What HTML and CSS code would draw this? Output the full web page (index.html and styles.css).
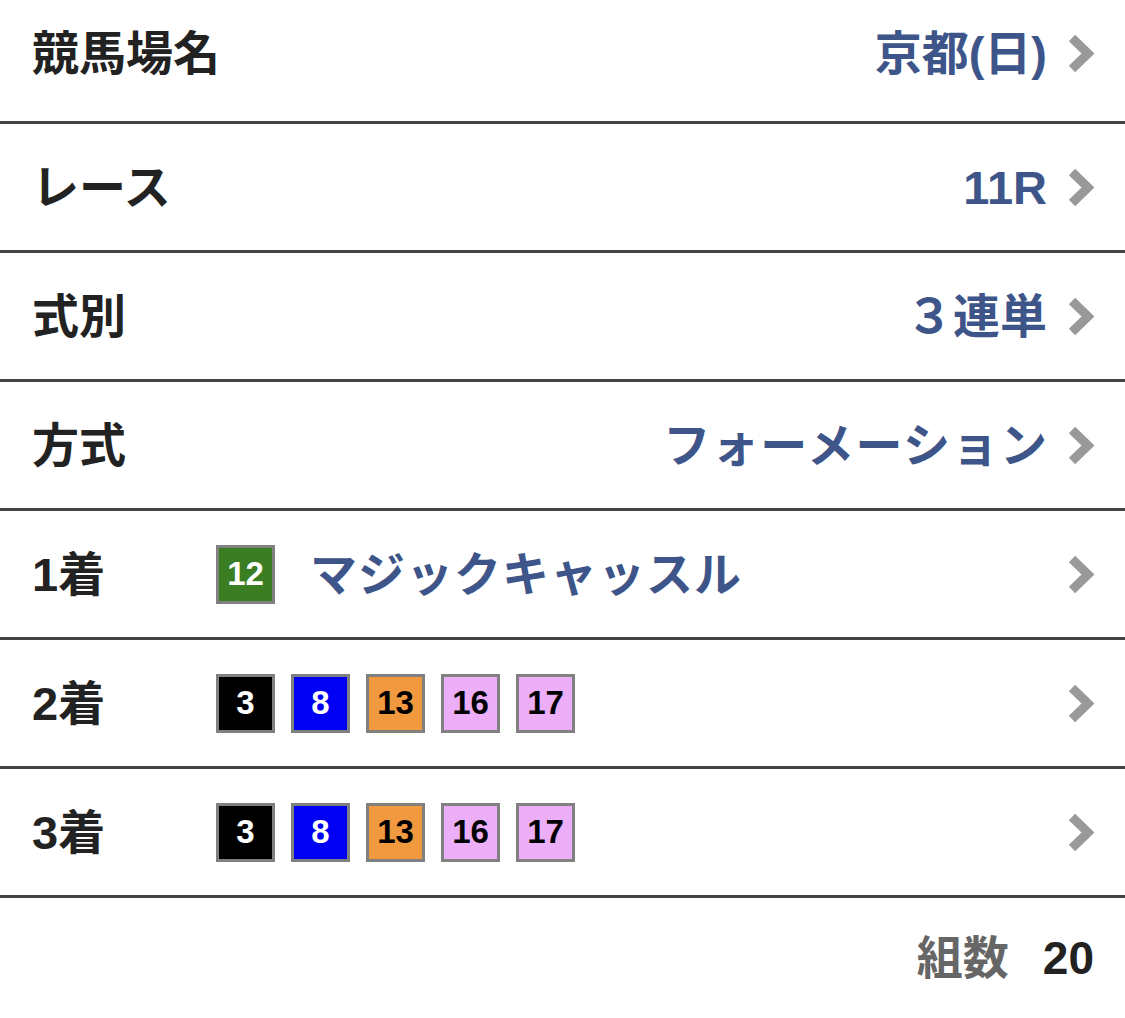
FILE: index.html
```html
<!DOCTYPE html>
<html lang="ja">
<head>
<meta charset="utf-8">
<link rel="stylesheet" href="styles.css">
</head>
<body>
<div class="list">
  <div class="row first">
    <div class="label">競馬場名</div>
    <div class="value">京都(日)</div>
    <svg class="chev" viewBox="0 0 27 41"><polyline points="5,5 21,20.5 5,36"/></svg>
  </div>
  <div class="row">
    <div class="label">レース</div>
    <div class="value">11R</div>
    <svg class="chev" viewBox="0 0 27 41"><polyline points="5,5 21,20.5 5,36"/></svg>
  </div>
  <div class="row">
    <div class="label">式別</div>
    <div class="value">３連単</div>
    <svg class="chev" viewBox="0 0 27 41"><polyline points="5,5 21,20.5 5,36"/></svg>
  </div>
  <div class="row">
    <div class="label">方式</div>
    <div class="value kana">フォーメーション</div>
    <svg class="chev" viewBox="0 0 27 41"><polyline points="5,5 21,20.5 5,36"/></svg>
  </div>
  <div class="row">
    <div class="label">1着</div>
    <div class="horses">
      <span class="badge green">12</span>
      <span class="name">マジックキャッスル</span>
    </div>
    <svg class="chev" viewBox="0 0 27 41"><polyline points="5,5 21,20.5 5,36"/></svg>
  </div>
  <div class="row">
    <div class="label">2着</div>
    <div class="horses">
      <span class="badge black">3</span>
      <span class="badge blue">8</span>
      <span class="badge orange">13</span>
      <span class="badge pink">16</span>
      <span class="badge pink">17</span>
    </div>
    <svg class="chev" viewBox="0 0 27 41"><polyline points="5,5 21,20.5 5,36"/></svg>
  </div>
  <div class="row">
    <div class="label">3着</div>
    <div class="horses">
      <span class="badge black">3</span>
      <span class="badge blue">8</span>
      <span class="badge orange">13</span>
      <span class="badge pink">16</span>
      <span class="badge pink">17</span>
    </div>
    <svg class="chev" viewBox="0 0 27 41"><polyline points="5,5 21,20.5 5,36"/></svg>
  </div>
  <div class="total">
    <span class="total-label">組数</span>
    <span class="total-num">20</span>
  </div>
</div>
</body>
</html>
```

FILE: styles.css
```css
html, body {
  margin: 0;
  padding: 0;
  background: #fff;
}
body {
  font-family: "Liberation Sans", "Noto Sans CJK JP", sans-serif;
  font-weight: bold;
  color: #222;
}
.list {
  display: flex;
  flex-direction: column;
}
.row {
  display: flex;
  align-items: center;
  height: 126px;
  padding: 0 31px 0 32px;
  border-bottom: 3px solid #444;
}
.row.first {
  height: 107px;
  padding-bottom: 14px;
}
.label {
  width: 184px;
  flex: none;
  font-size: 47px;
  line-height: 1;
  white-space: nowrap;
  color: #222;
}
.value {
  flex: 1;
  text-align: right;
  font-size: 47px;
  line-height: 1;
  white-space: nowrap;
  color: #3d5589;
}
.value.kana {
  letter-spacing: 1.5px;
  margin-right: -1.5px;
}
.chev {
  flex: none;
  width: 27px;
  height: 41px;
  margin-left: 20px;
}
.chev polyline {
  fill: none;
  stroke: #999;
  stroke-width: 9;
  stroke-linejoin: miter;
}
.horses {
  flex: 1;
  display: flex;
  align-items: center;
  gap: 16px;
}
.badge {
  box-sizing: border-box;
  width: 59px;
  height: 59px;
  border: 3px solid #808080;
  display: flex;
  align-items: center;
  justify-content: center;
  font-family: "Liberation Sans", sans-serif;
  font-size: 33px;
  font-weight: bold;
  color: #000;
}
.badge.green { background: #3a7d22; color: #fff; }
.badge.black { background: #000; color: #fff; }
.badge.blue { background: #0000f5; color: #fff; }
.badge.orange { background: #f0993e; }
.badge.pink { background: #ecaef7; }
.name {
  margin-left: 19px;
  font-size: 47px;
  line-height: 1;
  letter-spacing: 1px;
  white-space: nowrap;
  color: #3d5589;
}
.total {
  display: flex;
  justify-content: flex-end;
  align-items: center;
  height: 120px;
  padding-right: 31px;
  gap: 34px;
  font-size: 46px;
  line-height: 1;
}
.total-label { color: #666; }
.total-num { color: #222; }
```
